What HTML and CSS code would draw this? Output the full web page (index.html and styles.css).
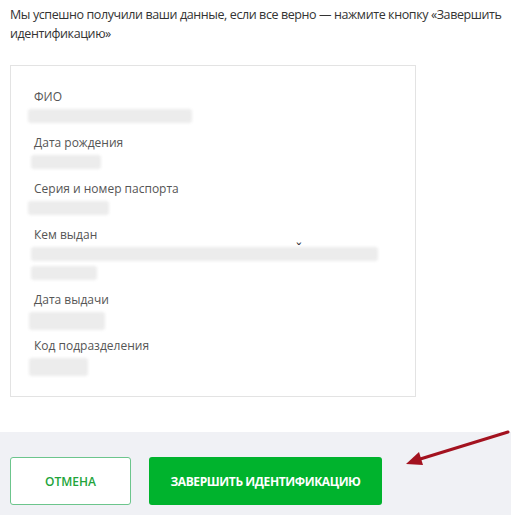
FILE: index.html
```html
<!DOCTYPE html>
<html lang="ru">
<head>
<meta charset="utf-8">
<link rel="stylesheet" href="styles.css">
</head>
<body>
<div class="page">
  <p class="intro">Мы успешно получили ваши данные, если все верно — нажмите кнопку «Завершить идентификацию»</p>
  <div class="card">
    <div class="field">
      <div class="label">ФИО</div>
      <div class="ph" style="width:164px;margin-left:-6px"></div>
    </div>
    <div class="field">
      <div class="label">Дата рождения</div>
      <div class="ph" style="width:70px;margin-left:-3px"></div>
    </div>
    <div class="field">
      <div class="label">Серия и номер паспорта</div>
      <div class="ph" style="width:81px;margin-left:-6px"></div>
    </div>
    <div class="field field-issued">
      <div class="label">Кем выдан</div>
      <div class="ph" style="width:347px;margin-left:-3px"></div>
      <div class="ph ph-second" style="width:66px;margin-left:-3px"></div>
      <span class="caret">ˇ</span>
    </div>
    <div class="field">
      <div class="label">Дата выдачи</div>
      <div class="ph ph-tall" style="width:76px;margin-left:-5px"></div>
    </div>
    <div class="field">
      <div class="label">Код подразделения</div>
      <div class="ph ph-tall" style="width:59px;margin-left:-5px"></div>
    </div>
  </div>
</div>
<div class="footer">
  <button class="btn btn-cancel">Отмена</button>
  <button class="btn btn-primary">Завершить идентификацию</button>
  <svg class="arrow" width="110" height="40" viewBox="0 0 110 40">
    <line x1="103" y1="4" x2="12" y2="32" stroke="#a3121f" stroke-width="3" stroke-linecap="round"/>
    <polygon points="1,36 14,24 18,37" fill="#a3121f"/>
  </svg>
</div>
</body>
</html>
```
FILE: styles.css
```css
html, body {
  margin: 0;
  padding: 0;
  background: #fff;
}
body {
  font-family: "Open Sans", "Liberation Sans", sans-serif;
  color: #333;
  width: 511px;
  height: 515px;
  overflow: hidden;
  position: relative;
}
.page {
  padding: 5px 4px 0 10px;
}
.intro {
  margin: 0;
  font-size: 12.5px;
  line-height: 19px;
  letter-spacing: -0.4px;
  color: #333;
}
.card {
  margin-top: 22px;
  width: 406px;
  border: 1px solid #e3e3e3;
  padding: 23px 0 24px 23px;
  box-sizing: border-box;
  display: flex;
  flex-direction: column;
  gap: 12px;
}
.field {
  display: flex;
  flex-direction: column;
}
.field-issued {
  position: relative;
}
.label {
  font-size: 12px;
  line-height: 16px;
  color: #555;
}
.ph {
  height: 14px;
  margin-top: 4px;
  background: #ececec;
  border-radius: 3px;
  filter: blur(1.5px);
}
.ph-second {
  margin-top: 5px;
}
.ph-tall {
  height: 18px;
  margin-bottom: -4px;
}
.caret {
  position: absolute;
  left: 262px;
  top: 17px;
  font-size: 14px;
  line-height: 10px;
  color: #333;
}
.footer {
  margin-top: 35px;
  background: #f0f1f5;
  height: 100px;
  padding: 25px 10px 0 10px;
  box-sizing: border-box;
  display: flex;
  align-items: flex-start;
  gap: 18px;
  position: relative;
}
.btn {
  height: 48px;
  border-radius: 3px;
  font-family: "Open Sans", "Liberation Sans", sans-serif;
  font-weight: 700;
  font-size: 12px;
  text-transform: uppercase;
  cursor: pointer;
  padding: 0;
}
.btn-cancel {
  width: 121px;
  background: #fff;
  border: 1px solid #6cc58c;
  color: #22a43a;
  font-weight: 600;
}
.btn-primary {
  width: 233px;
  background: #00b32d;
  border: none;
  color: #fff;
  letter-spacing: -0.4px;
}
.arrow {
  position: absolute;
  left: 405px;
  top: -4px;
}
```
